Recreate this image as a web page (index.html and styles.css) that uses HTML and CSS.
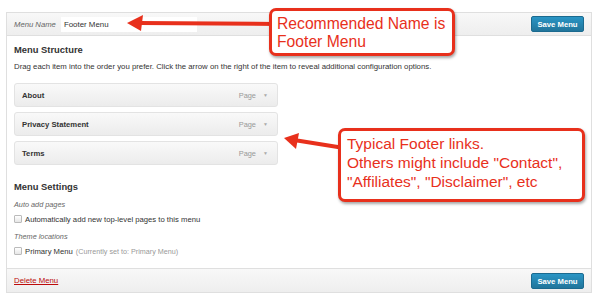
FILE: index.html
```html
<!DOCTYPE html>
<html>
<head>
<meta charset="utf-8">
<link rel="stylesheet" href="styles.css">
</head>
<body>
<div class="stage">
  <div class="panel">
    <div class="bar bar-top">
      <div class="name-field">
        <span class="label">Menu Name</span>
        <span class="input">Footer Menu</span>
      </div>
      <span class="btn">Save Menu</span>
    </div>
    <div class="body">
      <h3 class="heading">Menu Structure</h3>
      <p class="desc">Drag each item into the order you prefer. Click the arrow on the right of the item to reveal additional configuration options.</p>
      <ul class="items">
        <li class="item"><span class="title">About</span><span class="type">Page <span class="caret">▼</span></span></li>
        <li class="item"><span class="title">Privacy Statement</span><span class="type">Page <span class="caret">▼</span></span></li>
        <li class="item"><span class="title">Terms</span><span class="type">Page <span class="caret">▼</span></span></li>
      </ul>
      <h3 class="heading settings">Menu Settings</h3>
      <div class="sub">Auto add pages</div>
      <label class="check"><span class="box"></span>Automatically add new top-level pages to this menu</label>
      <div class="sub">Theme locations</div>
      <label class="check"><span class="box"></span>Primary Menu <span class="note">(Currently set to: Primary Menu)</span></label>
    </div>
    <div class="bar bar-bottom">
      <a class="delete">Delete Menu</a>
      <span class="btn">Save Menu</span>
    </div>
  </div>

  <svg class="arrow arrow-1" width="150" height="20" viewBox="0 0 150 20">
    <line x1="12" y1="10" x2="150" y2="11" stroke="#e8301c" stroke-width="4"/>
    <polygon points="0,10 16,2 14,18" fill="#e8301c"/>
  </svg>
  <div class="callout callout-1">Recommended Name is<br>Footer Menu</div>

  <svg class="arrow arrow-2" width="60" height="20" viewBox="0 0 60 20">
    <line x1="10" y1="5" x2="60" y2="13" stroke="#e8301c" stroke-width="4"/>
    <polygon points="0,3 15,-2 12,14" fill="#e8301c"/>
  </svg>
  <div class="callout callout-2">Typical Footer links.<br>Others might include "Contact",<br>"Affiliates", "Disclaimer", etc</div>
</div>
</body>
</html>
```

FILE: styles.css
```css
html, body {
  margin: 0;
  padding: 0;
  background: #fff;
}
body {
  font-family: "Liberation Sans", Arial, sans-serif;
  color: #333;
}
.stage {
  position: relative;
  width: 600px;
  height: 300px;
  overflow: hidden;
}
.panel {
  margin: 12px 0 0 6px;
  width: 584px;
  border: 1px solid #dfdfdf;
  display: flex;
  flex-direction: column;
}
.bar {
  display: flex;
  align-items: center;
  justify-content: space-between;
  padding: 0 7px 0 7px;
  background: linear-gradient(#f8f8f8, #eeeeee);
}
.bar-top {
  height: 22px;
  border-bottom: 1px solid #dfdfdf;
}
.bar-bottom {
  height: 23px;
  border-top: 1px solid #dfdfdf;
}
.name-field {
  display: flex;
  align-items: center;
  gap: 5px;
}
.label {
  font-size: 7.7px;
  font-style: italic;
  color: #666;
}
.input {
  display: block;
  width: 130px;
  height: 15px;
  line-height: 15px;
  padding: 0 3px;
  background: #fff;
  font-size: 7.9px;
  color: #333;
}
.btn {
  display: block;
  width: 53px;
  height: 16px;
  line-height: 15px;
  text-align: center;
  border-radius: 2px;
  background: linear-gradient(#2a95c5, #21759b);
  border: 1px solid #1b6a8f;
  box-sizing: border-box;
  color: #fff;
  font-size: 7.7px;
  font-weight: bold;
}
.body {
  padding: 7px 7px 11px 7px;
}
.heading {
  margin: 0;
  font-size: 9.4px;
  line-height: 14px;
  font-weight: bold;
  color: #333;
}
.desc {
  margin: 4px 0 0 0;
  font-size: 7.8px;
  line-height: 12px;
  color: #333;
}
.items {
  list-style: none;
  margin: 10px 0 0 0;
  padding: 0;
  display: flex;
  flex-direction: column;
  gap: 5px;
}
.item {
  width: 264px;
  height: 24px;
  box-sizing: border-box;
  display: flex;
  align-items: center;
  justify-content: space-between;
  padding: 0 9px 0 7px;
  border: 1px solid #e3e3e3;
  border-radius: 3px;
  background: linear-gradient(#f9f9f9, #ececec);
}
.title {
  font-size: 7.7px;
  font-weight: bold;
  color: #333;
}
.type {
  font-size: 7.4px;
  color: #999;
}
.caret {
  font-size: 5px;
  color: #aaa;
  margin-left: 5px;
  vertical-align: 1px;
}
.settings {
  margin-top: 15px;
}
.sub {
  margin-top: 5px;
  font-size: 7.3px;
  line-height: 12px;
  font-style: italic;
  color: #666;
}
.check {
  display: flex;
  align-items: center;
  margin-top: 2px;
  height: 12px;
  font-size: 7.7px;
  color: #333;
}
.check + .sub {
  margin-top: 6px;
}
.box {
  display: inline-block;
  width: 6px;
  height: 6px;
  border: 1px solid #bbb;
  border-radius: 1px;
  background: linear-gradient(#fff, #e6e6e6);
  margin-right: 3px;
}
.note {
  color: #999;
  font-size: 7.2px;
  margin-left: 3px;
}
.delete {
  font-size: 7.8px;
  color: #bc0b0b;
  text-decoration: underline;
}
.callout {
  position: absolute;
  background: #fff;
  border: 3px solid #e8301c;
  border-radius: 7px;
  box-shadow: 1px 2px 3px rgba(0,0,0,0.35);
  color: #e8301c;
  font-family: "Liberation Sans", Arial, sans-serif;
  box-sizing: border-box;
  white-space: nowrap;
}
.callout-1 {
  left: 269px;
  top: 8px;
  width: 186px;
  height: 48px;
  padding: 4px 0 0 5px;
  font-size: 15.7px;
  line-height: 18px;
}
.callout-2 {
  left: 338px;
  top: 128px;
  width: 247px;
  height: 74px;
  padding: 3px 0 0 6px;
  font-size: 15.5px;
  line-height: 19px;
}
.arrow {
  position: absolute;
  overflow: visible;
}
.arrow-1 {
  left: 127px;
  top: 13px;
}
.arrow-2 {
  left: 284px;
  top: 135px;
}
```
